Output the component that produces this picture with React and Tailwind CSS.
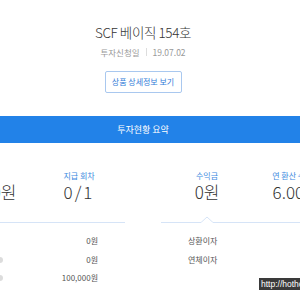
const font = { fontFamily: '"Noto Sans CJK KR", "Noto Sans", sans-serif' };

const App = () => {
  return (
    <div className="w-[300px] h-[300px] overflow-hidden bg-white relative" style={font}>
      {/* Header */}
      <div className="w-[286px] flex flex-col items-center pt-[21px]">
        <h1 className="text-[13.5px] leading-[22px] font-light text-[#333] tracking-[-0.4px]">SCF 베이직 154호</h1>
        <div className="mt-[3px] flex items-center text-[8.5px] leading-[12px] text-[#999]">
          <span>투자신청일</span>
          <span className="mx-[6px] w-px h-[8px] bg-[#ddd]" />
          <span>19.07.02</span>
        </div>
        <button className="mt-[13px] w-[77px] h-[22px] border border-[#a9c8ef] rounded-[2px] text-[8px] text-[#2f7bd8] flex items-center justify-center">
          상품 상세정보 보기
        </button>
      </div>

      {/* Summary bar */}
      <div className="mt-[23px] h-[27px] bg-[#2282e8] flex items-center justify-center">
        <span className="text-white text-[9px] pr-[14px]">투자현황 요약</span>
      </div>

      {/* Stats */}
      <div className="flex ml-[-26px] gap-[36px] mt-[27px]">
        <div className="w-[151px] shrink-0">
          <div className="flex border-b border-[#d6e4f7] pb-[20px]">
            <div className="w-[60px] flex flex-col items-center">
              <span className="text-[8px] leading-[12px] text-[#3c8ae0]">&nbsp;</span>
              <span className="text-[17px] leading-[20px] font-light text-[#333]">0원</span>
            </div>
            <div className="w-[90px] flex flex-col items-center">
              <span className="text-[8px] leading-[12px] text-[#3c8ae0]">지급 회차</span>
              <span className="text-[17px] leading-[20px] font-light text-[#333] tracking-[2px]">0/1</span>
            </div>
          </div>
          <div className="flex flex-col pt-[9px] text-[8px] text-[#555]">
            <div className="h-[18.5px] flex items-center justify-end pr-[27px]">0원</div>
            <div className="h-[18.5px] flex items-center justify-between pl-[23px] pr-[27px]">
              <span className="w-[6px] h-[6px] rounded-full bg-[#dcdcdc]" />
              <span>0원</span>
            </div>
            <div className="h-[18.5px] flex items-center justify-between pl-[23px] pr-[27px]">
              <span className="w-[6px] h-[6px] rounded-full bg-[#dcdcdc]" />
              <span>100,000원</span>
            </div>
          </div>
        </div>

        <div className="w-[178px] shrink-0">
          <div className="flex border-b border-[#d6e4f7] pb-[20px] relative">
            <div className="w-[92px] flex flex-col items-center">
              <span className="text-[8px] leading-[12px] text-[#3c8ae0]">수익금</span>
              <span className="text-[17px] leading-[20px] font-light text-[#333]">0원</span>
            </div>
            <div className="w-[86px] flex flex-col items-center whitespace-nowrap">
              <span className="text-[8px] leading-[12px] text-[#3c8ae0]">연 환산 수익률</span>
              <span className="text-[17px] leading-[20px] font-light text-[#333]">6.00%</span>
            </div>
            <svg className="absolute left-[40px] bottom-[-1px]" width="12" height="7" viewBox="0 0 12 7">
              <polyline points="0,6.5 6,1 12,6.5" fill="#fff" stroke="#d6e4f7" strokeWidth="1" />
              <line x1="0.5" y1="6.5" x2="11.5" y2="6.5" stroke="#fff" strokeWidth="1" />
            </svg>
          </div>
          <div className="flex flex-col pt-[9px] text-[8px] text-[#555]">
            <div className="h-[18.5px] flex items-center pl-[27px]">상환이자</div>
            <div className="h-[18.5px] flex items-center pl-[27px]">연체이자</div>
          </div>
        </div>
      </div>

      {/* Watermark */}
      <div className="absolute left-[259px] top-[278px] h-[12px] pl-[2px] bg-[#3a3a3a] text-white text-[8.5px] leading-[12px] whitespace-nowrap" style={{ fontFamily: '"Liberation Sans", sans-serif' }}>
        http://hothouse
      </div>
    </div>
  );
};

export default App;
